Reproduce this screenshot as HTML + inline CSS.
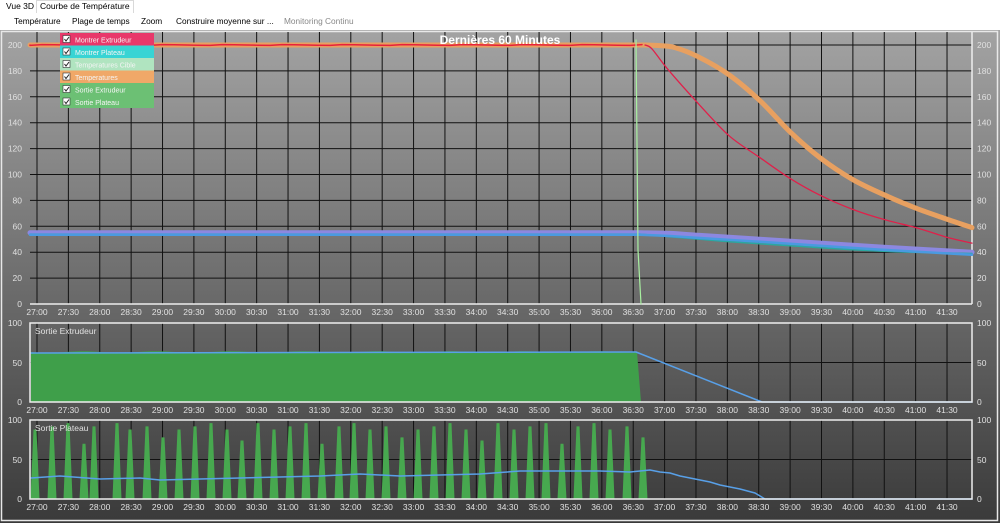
<!DOCTYPE html>
<html><head><meta charset="utf-8"><style>
html,body{margin:0;padding:0;width:1000px;height:523px;overflow:hidden;background:#fff;font-family:"Liberation Sans",sans-serif}
#tabs{position:absolute;left:0;top:0;width:1000px;height:13px;background:#fff;border-bottom:1px solid #d9d9d9;font-size:8.5px}
.tab{position:absolute;top:1px;height:11px;line-height:11px;padding:0 3px;color:#000}
#menu{position:absolute;left:0;top:13px;width:1000px;height:17px;background:#fff;font-size:8.3px;line-height:17px}
#menu span{position:absolute;top:0}
svg{position:absolute;left:0;top:30px}
</style></head><body>
<div id="tabs"><div class="tab" style="left:3px">Vue 3D</div><div class="tab" style="left:36px;background:#fff;border:1px solid #d9d9d9;border-bottom:none;top:0;height:13px">Courbe de Température</div></div>
<div id="menu"><span style="left:14px">Température</span><span style="left:72px">Plage de temps</span><span style="left:141px">Zoom</span><span style="left:176px">Construire moyenne sur ...</span><span style="left:284px;color:#888">Monitoring Continu</span></div>
<svg id="s" width="1000" height="493" viewBox="0 30 1000 493" xmlns="http://www.w3.org/2000/svg">
<defs><linearGradient id="bg" x1="0" y1="0" x2="0" y2="1"><stop offset="0" stop-color="#a3a3a3"/><stop offset="1" stop-color="#3a3a3a"/></linearGradient></defs>
<rect x="0" y="30" width="1000" height="493" fill="url(#bg)"/>
<rect x="1.5" y="31.5" width="996" height="489" fill="none" stroke="#e8e8e8" stroke-width="1.5"/>
<g id="g"></g>
</svg>
<script>
var g=document.getElementById('g'),h='';
function L(x1,y1,x2,y2,c,w){h+='<line x1="'+x1+'" y1="'+y1+'" x2="'+x2+'" y2="'+y2+'" stroke="'+c+'" stroke-width="'+(w||1)+'"/>';}
function T(x,y,t,a,s,c,b){h+='<text x="'+x+'" y="'+y+'" font-size="'+(s||8.5)+'" fill="'+(c||'#e0e0e0')+'" text-anchor="'+(a||'middle')+'" font-family="Liberation Sans"'+(b?' font-weight="bold"':'')+'>'+t+'</text>';}
function P(d,c,w,f){h+='<path d="'+d+'" stroke="'+c+'" stroke-width="'+w+'" fill="'+(f||'none')+'" stroke-linejoin="round" stroke-linecap="round"/>';}
var X0=37,DX=31.38,L0=30,R0=972;
var labs=[];for(var i=0;i<30;i++){var m=27+Math.floor(i/2);labs.push(m+':'+(i%2?'30':'00'));}
function vgrid(t,b){for(var i=0;i<30;i++){var x=X0+i*DX;L(x,t,x,b,'#111',1);}}
var t1=32,b1=304;vgrid(t1,b1);
for(var v=0;v<=200;v+=20){var y=b1-v*1.295;L(L0,y,R0,y,'#111',1);T(22,y+3,v,'end');T(977,y+3,v,'start');}
for(var i=0;i<30;i++){T(X0+i*DX,b1+11,labs[i]);}
L(L0,b1,R0,b1,'#eee',1.5);L(R0,t1,R0,b1,'#eee',1.5);
function yt(v){return b1-v*1.295;}
function curve(p){var d='M'+p[0][0]+' '+yt(p[0][1]);for(var i=0;i<p.length-1;i++){var p0=p[i>0?i-1:i],p1=p[i],p2=p[i+1],p3=p[i+2<p.length?i+2:i+1];
var c1x=p1[0]+(p2[0]-p0[0])/6,c1y=p1[1]+(p2[1]-p0[1])/6,c2x=p2[0]-(p3[0]-p1[0])/6,c2y=p2[1]-(p3[1]-p1[1])/6;
d+=' C'+c1x.toFixed(1)+' '+yt(c1y).toFixed(1)+' '+c2x.toFixed(1)+' '+yt(c2y).toFixed(1)+' '+p2[0]+' '+yt(p2[1]).toFixed(1);}return d;}
function C(v0,pts){var s=pts[0];return 'M30 '+yt(v0)+' L'+s[0]+' '+yt(s[1])+curve(pts).replace(/^M[^C]*/,' ');}
P(C(55,[[640,55],[670,54.5],[700,53],[760,50],[820,47],[880,44],[972,40]]),'#8c88e0',5);
P(C(54,[[640,54],[670,52],[700,50],[730,48],[790,45],[850,42],[910,40],[972,39]]),'#2aa8a0',1.5);
P(C(53.5,[[640,53.5],[670,52.5],[700,51],[760,48],[820,45],[880,42],[972,38]]),'#4a9ae0',2.5);
P(C(200,[[645,200],[660,199.5],[675,198],[698,191],[729,177],[760,157],[790,133],[820,113],[853,96],[885,84],[916,74],[945,66],[972,59]]),'#e8a060',5);
var d='M30 '+yt(200);for(var x=30;x<645;x+=12){d+=' L'+x+' '+yt(200+((x*7)%5-2)*0.15);}
P(d,'#e8203a',1.5);
P(curve([[645,200],[652,197],[667,182],[698,155],[729,130],[760,113],[790,97],[820,84],[853,73],[885,65],[916,59],[945,52],[972,47]]),'#e0204a',1.3);
P('M636 40 L638 250 L641 304','#a8f0a0',1.2);
T(500,44,'Dernières 60 Minutes','middle',12,'#fff',1);
var lg=[['Montrer Extrudeur','#e8386a'],['Montrer Plateau','#38d4d4'],['Temperatures Cible','#b0e4c0'],['Temperatures','#f0a868'],['Sortie Extrudeur','#6cc074'],['Sortie Plateau','#6cc074']];
for(var i=0;i<lg.length;i++){var y=33+i*12.5;h+='<rect x="60" y="'+y+'" width="94" height="12.5" fill="'+lg[i][1]+'"/>';h+='<rect x="63" y="'+(y+2.5)+'" width="7" height="7" fill="#fff" stroke="#333" stroke-width="0.6"/>';h+='<path d="M64.5 '+(y+6)+' l1.5 2 l3 -4" stroke="#222" fill="none" stroke-width="1"/>';T(75,y+9.5,lg[i][0],'start',7,'#f4f4f4');}
var t2=323,b2=402;
vgrid(t2,b2);L(L0,362.5,R0,362.5,'#111',1);
T(22,326,'100','end');T(22,366,'50','end');T(22,405,'0','end');T(977,326,'100','start');T(977,366,'50','start');T(977,405,'0','start');
for(var i=0;i<30;i++){T(X0+i*DX,b2+11,labs[i]);}
d='M31 '+b2+' L31 352';for(var x=31;x<=636;x+=8){d+=' L'+x+' '+(352+Math.sin(x*0.7)*0.8);}d+=' L637 352 L641 '+b2+' Z';
P(d,'#3f9f4a',0,'#3f9f4a');
P('M31 353 L636 352 L762 402 L972 402','#58a0e8',1.5);
T(35,334,'Sortie Extrudeur','start',8.5);
h+='<rect x="30" y="'+t2+'" width="942" height="'+(b2-t2)+'" fill="none" stroke="#eee" stroke-width="1.5"/>';
var t3=420,b3=499;
vgrid(t3,b3);L(L0,459.5,R0,459.5,'#111',1);
T(22,423,'100','end');T(22,463,'50','end');T(22,502,'0','end');T(977,423,'100','start');T(977,463,'50','start');T(977,502,'0','start');
for(var i=0;i<30;i++){T(X0+i*DX,b3+11,labs[i]);}
var px=[35,52,68,84,94,117,130,147,163,179,195,211,227,242,258,274,290,306,322,339,354,370,386,402,418,434,450,466,482,498,514,530,546,562,578,594,610,627,643];
for(var i=0;i<px.length;i++){var hh=(i%5==3?70:88)+(i%3)*4;var x=px[i];P('M'+(x-4.5)+' '+b3+' L'+(x-1.5)+' '+(b3-hh*0.79)+' L'+(x+1.5)+' '+(b3-hh*0.79)+' L'+(x+4.5)+' '+b3+' Z','none',0,'#47a84f');}
d='M31 478 L60 476 L100 479 L140 478 L160 480 L200 479 L240 478 L280 477 L320 476 L360 474 L400 476 L440 475 L480 474 L520 471 L560 471 L600 471 L630 472 L650 470 L660 472 L670 473 L680 476 L690 478 L700 480 L710 482 L720 485 L740 489 L755 493 L765 499 L972 499';
P(d,'#58a0e8',1.5);
T(35,431,'Sortie Plateau','start',8.5);
h+='<rect x="30" y="'+t3+'" width="942" height="'+(b3-t3)+'" fill="none" stroke="#eee" stroke-width="1.5"/>';
g.innerHTML=h;
</script>
</body></html>
